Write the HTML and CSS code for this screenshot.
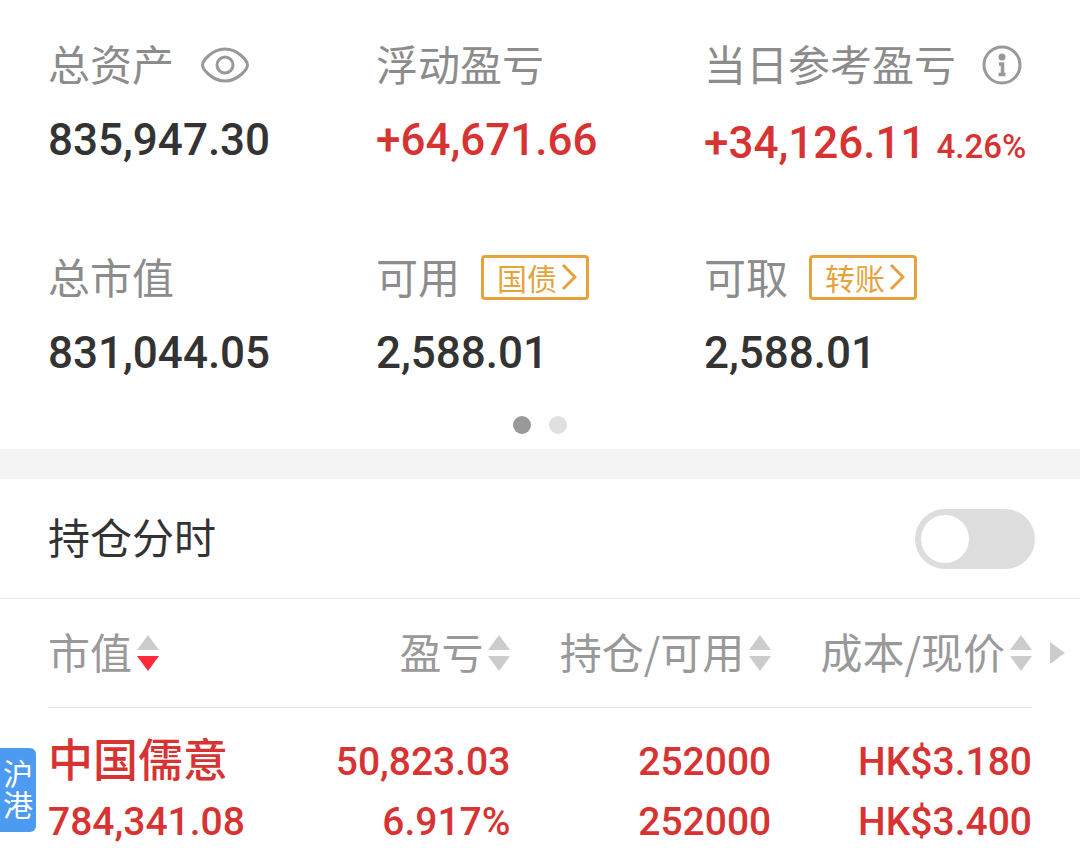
FILE: index.html
```html
<!DOCTYPE html>
<html lang="zh-CN">
<head>
    <meta charset="UTF-8">
    <meta name="viewport" content="width=device-width, initial-scale=1.0">
    <title>持仓</title>
    <link rel="stylesheet" href="styles.css">
</head>
<body>
    <section class="summary">
        <div class="item">
            <div class="label">
                <span>总资产</span>
                <button type="button" class="icon-btn" aria-label="隐藏金额">
                    <svg width="50" height="38" viewBox="0 0 50 38" fill="none" stroke="#999" stroke-width="3">
                        <path d="M2.500 19C2.500 15 12 3 25 3s22.500 12 22.500 16S38 35 25 35 2.500 23 2.500 19z"/>
                        <circle cx="25" cy="19" r="8"/>
                    </svg>
                </button>
            </div>
            <div class="value">835,947.30</div>
        </div>
        <div class="item">
            <div class="label"><span>浮动盈亏</span></div>
            <div class="value red">+64,671.66</div>
        </div>
        <div class="item">
            <div class="label">
                <span>当日参考盈亏</span>
                <button type="button" class="icon-btn" aria-label="说明">
                    <svg width="40" height="40" viewBox="0 0 40 40" fill="none" stroke="#999">
                        <circle cx="20" cy="20" r="18" stroke-width="3"/>
                        <circle cx="20" cy="12" r="3.500" fill="#999" stroke="none"/>
                        <path d="M17 19h3.500v10M16.500 29.500h7" stroke-width="3.500"/>
                    </svg>
                </button>
            </div>
            <div class="value day red">+34,126.11 <small>4.26%</small></div>
        </div>
        <div class="item">
            <div class="label"><span>总市值</span></div>
            <div class="value">831,044.05</div>
        </div>
        <div class="item">
            <div class="label">
                <span>可用</span>
                <a href="#" class="tag">国债<svg width="16" height="26" viewBox="0 0 16 26" fill="none" stroke="#e5a33d" stroke-width="3"><path d="M2 1l12 12L2 25"/></svg></a>
            </div>
            <div class="value">2,588.01</div>
        </div>
        <div class="item">
            <div class="label">
                <span>可取</span>
                <a href="#" class="tag">转账<svg width="16" height="26" viewBox="0 0 16 26" fill="none" stroke="#e5a33d" stroke-width="3"><path d="M2 1l12 12L2 25"/></svg></a>
            </div>
            <div class="value">2,588.01</div>
        </div>
    </section>
    <div class="dots">
        <span class="dot active"></span>
        <span class="dot"></span>
    </div>

    <div class="switch-row">
        <label for="timeline">持仓分时</label>
        <input type="checkbox" id="timeline" class="switch">
    </div>

    <section class="holdings">
        <table>
            <thead>
                <tr>
                    <th><button type="button" class="sort desc">市值<i></i></button></th>
                    <th><button type="button" class="sort">盈亏<i></i></button></th>
                    <th><button type="button" class="sort">持仓/可用<i></i></button></th>
                    <th><button type="button" class="sort">成本/现价<i></i></button></th>
                </tr>
            </thead>
            <tbody>
                <tr>
                    <td><div class="name">中国儒意</div><div>784,341.08</div></td>
                    <td><div>50,823.03</div><div>6.917%</div></td>
                    <td><div>252000</div><div>252000</div></td>
                    <td><div>HK$3.180</div><div>HK$3.400</div></td>
                </tr>
            </tbody>
        </table>
        <span class="more"></span>
        <span class="market">沪港</span>
    </section>
</body>
</html>
```

FILE: styles.css
```css
* {
    box-sizing: border-box;
}
body {
    margin: 0;
    background: #fff;
    color: #333;
    font-family: "Noto Sans CJK SC", sans-serif;
}
button {
    padding: 0;
    border: none;
    background: none;
    font: inherit;
    color: inherit;
    cursor: pointer;
}
svg {
    display: block;
}
.red {
    color: #d73333;
}

/* summary */
.summary {
    display: grid;
    grid-template-columns: repeat(3, minmax(0, 1fr));
    row-gap: 69px;
    padding: 33px 48px 0;
}
.label {
    display: flex;
    align-items: center;
    height: 60px;
    font-size: 42px;
    line-height: 60px;
    color: #8c8c8c;
    white-space: nowrap;
}
.icon-btn {
    margin: 4px 0 0 26px;
}
.tag {
    display: flex;
    align-items: center;
    gap: 4px;
    height: 45px;
    margin: 2px 0 0 21px;
    padding: 0 9px 0 13px;
    border: 3px solid #e5a33d;
    border-radius: 4px;
    font-size: 30px;
    line-height: 36px;
    color: #e5a33d;
    text-decoration: none;
}
.value {
    height: 84px;
    padding-top: 17px;
    font-family: Roboto, "Noto Sans CJK SC", sans-serif;
    font-size: 44px;
    font-weight: 500;
    line-height: 60px;
    white-space: nowrap;
}
.day {
    padding-top: 20px;
}
.day small {
    font-size: 33px;
}
.dots {
    display: flex;
    justify-content: center;
    gap: 18px;
    padding: 26px 0 15px;
}
.dot {
    width: 18px;
    height: 18px;
    border-radius: 50%;
    background: #e0e0e0;
}
.dot.active {
    background: #999;
}

/* switch */
.switch-row {
    display: flex;
    align-items: center;
    justify-content: space-between;
    height: 150px;
    padding: 0 45px 0 48px;
    border-top: 30px solid #f4f4f4;
    border-bottom: 1px solid #ebebeb;
    font-size: 42px;
}
.switch-row label {
    padding-bottom: 6px;
}
.switch {
    appearance: none;
    width: 120px;
    height: 60px;
    margin: 0;
    padding: 6px;
    border-radius: 30px;
    background: #ddd;
    cursor: pointer;
}
.switch::before {
    content: "";
    display: block;
    width: 48px;
    height: 48px;
    border-radius: 50%;
    background: #fff;
}
.switch:checked {
    background: #4c9bf0;
}
.switch:checked::before {
    margin-left: auto;
}

/* holdings */
.holdings {
    position: relative;
    padding: 0 48px;
}
table {
    width: 100%;
    table-layout: fixed;
    border-collapse: collapse;
}
th {
    width: 26.5%;
    height: 108px;
    padding: 0 0 12px;
    border-bottom: 1px solid #e8e8e8;
    font-size: 42px;
    font-weight: 400;
    color: #999;
    text-align: right;
    white-space: nowrap;
}
th:first-child {
    width: 20.5%;
}
th:first-child,
td:first-child {
    text-align: left;
}
.sort {
    display: inline-flex;
    align-items: center;
    gap: 5px;
    line-height: 60px;
    vertical-align: middle;
}
.sort i {
    margin-top: 4px;
}
.sort i::before,
.sort i::after {
    content: "";
    display: block;
    border: 0 solid transparent;
    border-width: 0 11px;
}
.sort i::before {
    margin-bottom: 6px;
    border-bottom: 15px solid #ccc;
}
.sort i::after {
    border-top: 15px solid #ccc;
}
.sort.desc i::after {
    border-top-color: #ff2a3a;
}
td {
    padding: 24px 0 8px;
    font-family: Roboto, "Noto Sans CJK SC", sans-serif;
    font-size: 39px;
    font-weight: 500;
    line-height: 60px;
    color: #d73333;
    text-align: right;
    white-space: nowrap;
}
.name {
    padding-bottom: 8px;
    font-family: "Noto Sans CJK SC", sans-serif;
    font-size: 45px;
    line-height: 52px;
}
.more {
    position: absolute;
    top: 43px;
    right: 15px;
    border-left: 15px solid #ccc;
    border-top: 11px solid transparent;
    border-bottom: 11px solid transparent;
}
.market {
    position: absolute;
    top: 149px;
    left: 0;
    width: 36px;
    height: 84px;
    padding: 9px 3px;
    border-radius: 0 6px 6px 0;
    background: #4c9bf0;
    color: #fff;
    font-size: 30px;
    line-height: 31px;
}
```
